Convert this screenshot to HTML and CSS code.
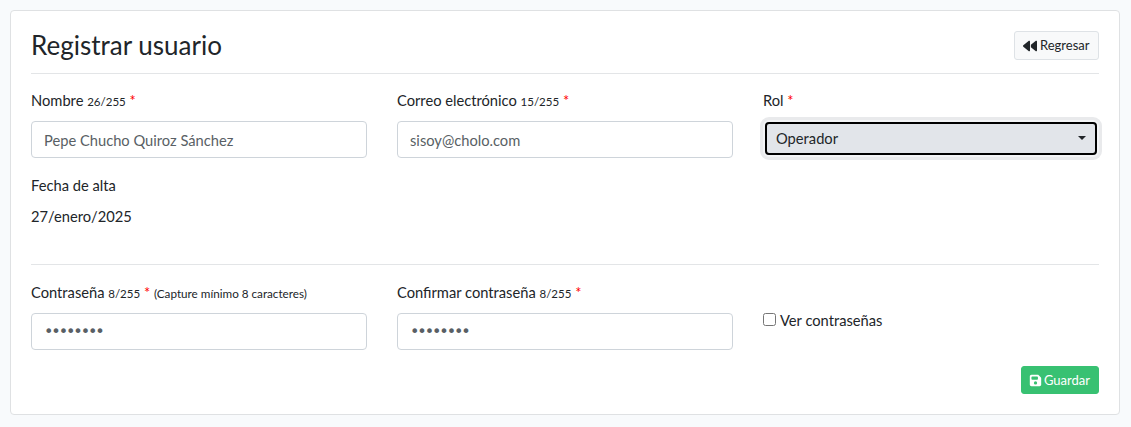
FILE: index.html
```html
<!DOCTYPE html>
<html lang="es">
<head>
<meta charset="utf-8">
<title>Registrar usuario</title>
<link rel="stylesheet" href="styles.css">
</head>
<body>
<main class="card">
  <header class="head">
    <h3 class="title">Registrar usuario</h3>
    <a class="btn btn-light" href="#">
      <svg class="icon back" viewBox="0 0 512 512"><path fill="currentColor" d="M459.500 440.600c9.500 7.900 22.800 9.700 34.100 4.400s18.400-16.600 18.400-29V96c0-12.400-7.200-23.700-18.400-29s-24.500-3.600-34.100 4.400L288 214.300V256v41.700L459.500 440.600zM256 352V256 128 96c0-12.400-7.200-23.700-18.400-29s-24.500-3.600-34.100 4.400l-192 160C4.200 237.500 0 246.500 0 256s4.200 18.500 11.500 24.600l192 160c9.500 7.900 22.800 9.700 34.100 4.400s18.400-16.600 18.400-29V352z"/></svg>
      Regresar
    </a>
  </header>

  <section class="grid first">
    <div class="field">
      <label class="lbl">Nombre <small>26/255</small> <span class="req">*</span></label>
      <input class="ctl" type="text" value="Pepe Chucho Quiroz Sánchez">
    </div>
    <div class="field">
      <label class="lbl">Correo electrónico <small>15/255</small> <span class="req">*</span></label>
      <input class="ctl" type="text" value="sisoy@cholo.com">
    </div>
    <div class="field">
      <label class="lbl">Rol <span class="req">*</span></label>
      <div class="sel-wrap">
        <select class="sel"><option>Operador</option></select>
        <span class="caret"></span>
      </div>
    </div>
  </section>

  <section class="alta">
    <div class="lbl">Fecha de alta</div>
    <div class="alta-val">27/enero/2025</div>
  </section>

  <hr class="rule">

  <section class="grid second">
    <div class="field">
      <label class="lbl">Contraseña <small>8/255</small> <span class="req">*</span> <small class="hint">(Capture mínimo 8 caracteres)</small></label>
      <input class="ctl pw" type="password" value="12345678">
    </div>
    <div class="field">
      <label class="lbl">Confirmar contraseña <small>8/255</small> <span class="req">*</span></label>
      <input class="ctl pw" type="password" value="12345678">
    </div>
    <div class="check">
      <label class="check-lbl"><input class="box" type="checkbox"> Ver contraseñas</label>
    </div>
  </section>

  <footer class="actions">
    <a class="btn btn-green" href="#">
      <svg class="icon save" viewBox="0 0 448 512"><path fill="currentColor" d="M64 32C28.700 32 0 60.700 0 96V416c0 35.300 28.700 64 64 64H384c35.300 0 64-28.700 64-64V173.300c0-17-6.700-33.300-18.700-45.300L352 50.700C340 38.700 323.700 32 306.700 32H64zm0 96c0-17.700 14.300-32 32-32H288c17.700 0 32 14.300 32 32v64c0 17.700-14.300 32-32 32H96c-17.700 0-32-14.300-32-32V128zM224 288a64 64 0 1 1 0 128 64 64 0 1 1 0-128z"/></svg>
      Guardar
    </a>
  </footer>
</main>
</body>
</html>
```

FILE: styles.css
```css
* { box-sizing: border-box; }

html, body { height: 100%; }

body {
  margin: 0;
  padding: 10px 11px 12px 10px;
  background: #f8fafc;
  color: #212529;
  font-family: "Lato", "Noto Sans", sans-serif;
  font-size: 14.7px;
  line-height: 23px;
}

.card {
  height: 405px;
  padding: 20px;
  background: #fff;
  border: 1px solid #dfe1e3;
  border-radius: 4px;
}

.head {
  display: flex;
  align-items: flex-start;
  justify-content: space-between;
  height: 43px;
  border-bottom: 1px solid #e3e5e7;
}

.title {
  margin: 0;
  font-size: 26px;
  font-weight: 400;
  line-height: 28px;
}

.btn {
  display: flex;
  align-items: center;
  height: 29px;
  padding: 0 8px;
  gap: 2px;
  border: 1px solid #dee2e6;
  border-radius: 3px;
  font-size: 13px;
  text-decoration: none;
}

.btn-light { padding: 0 8.500px; gap: 3px; background: #f8f9fa; color: #212529; }
.btn-green { height: 28px; padding: 0 8px 0 7px; background: #38c172; border-color: #38c172; color: #fff; }

.icon { width: 13px; height: 13px; display: block; }
.back { width: 14px; height: 14px; }

.grid {
  display: grid;
  grid-template-columns: repeat(3, 336px);
  column-gap: 30px;
}

.first { margin-top: 15px; }
.second { margin-top: 16px; }

.lbl { display: block; height: 23px; color: #212529; }

.lbl small { font-size: 11.5px; }
.lbl .hint { font-size: 11.700px; }

.req { color: #f00; }

.ctl {
  display: block;
  width: 100%;
  height: 37px;
  margin-top: 9px;
  padding: 0 12px;
  background: #fff;
  border: 1px solid #ced4da;
  border-radius: 4px;
  color: #595f65;
  font: inherit;
}

.pw {
  font-family: "DejaVu Sans", sans-serif;
  font-size: 16px;
  letter-spacing: -2.100px;
}

.sel-wrap { position: relative; height: 38px; margin-top: 8px; }

.sel {
  display: block;
  width: 100%;
  height: 37px;
  padding: 0 11px;
  appearance: none;
  background: #e2e5ea;
  border: 2px solid #f3f4f6;
  outline: 2px solid #000;
  outline-offset: -4px;
  box-shadow: 0 0 0 3px #e9eaec;
  border-radius: 6px;
  color: #212529;
  font: inherit;
}

.caret {
  position: absolute;
  top: 16px;
  right: 13px;
  border-style: solid;
  border-width: 4px 4px 0;
  border-color: #212529 transparent transparent;
}

.alta { margin-top: 16px; }
.alta-val { margin-top: 8px; }

.rule {
  margin: 36px 0 0;
  border: 0;
  border-top: 1px solid #e3e5e7;
}

.check { padding-top: 28px; }

.check-lbl { display: flex; align-items: center; gap: 4px; color: #212529; }

.box { width: 13px; height: 13px; margin: 0 0 3px; }

.actions {
  display: flex;
  justify-content: flex-end;
  margin-top: 16px;
}
```
